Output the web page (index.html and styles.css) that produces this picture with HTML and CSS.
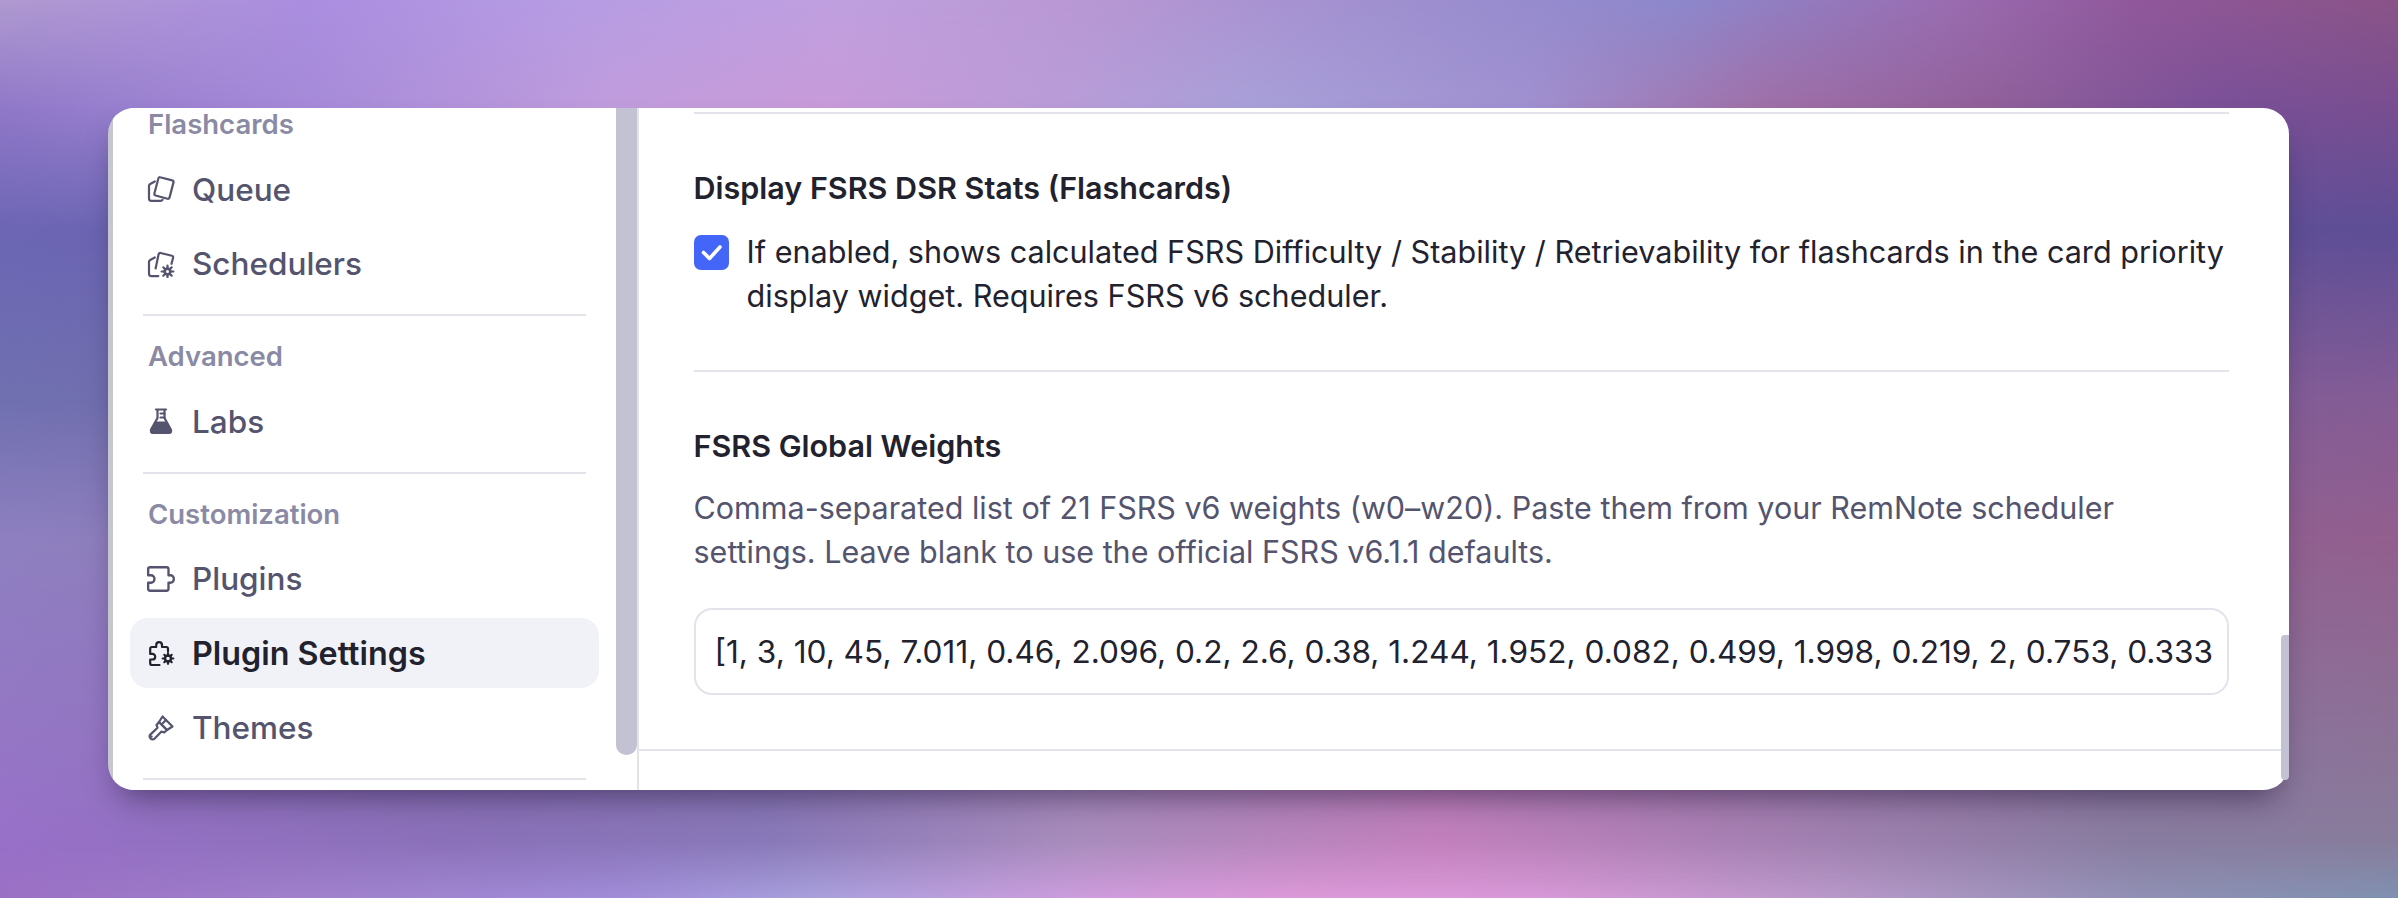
FILE: index.html
```html
<!DOCTYPE html>
<html lang="en">
<head>
    <meta charset="UTF-8">
    <title>Plugin Settings</title>
    <link rel="stylesheet" href="styles.css">
</head>
<body>
    <!-- wallpaper: horizontal colour rows faded into each other from top to bottom -->
    <div class="backdrop">
        <div class="band band-1"></div>
        <div class="band band-2"></div>
        <div class="band band-3"></div>
        <div class="band band-4"></div>
        <div class="band band-5"></div>
        <div class="band band-6"></div>
    </div>

    <div class="card">
        <nav class="sidebar">
            <div class="nav-label">Flashcards</div>
            <div class="nav-item">
                <svg class="nav-icon" viewBox="0 0 28 28"><path d="M13 2.2l12.3 3.2c.9.2 1.4 1.1 1.2 2l-4 15.2c-.2.9-1.1 1.4-2 1.2L8.6 20.5c-.9-.2-1.4-1.1-1.2-2l4-15.2c.2-.9 1.1-1.3 1.6-1.1z"/><path d="M7.8 6.5L3.2 9c-.7.4-1.2 1-1.2 1.8v12.7c0 1.3 1 2.3 2.3 2.3h9.3c.8 0 1.6-.3 2-1"/></svg>
                <span>Queue</span>
            </div>
            <div class="nav-item">
                <svg class="nav-icon" viewBox="0 0 28 28"><path d="M8.6 18.5l3-14.2c.2-.9 1.1-1.5 2-1.3l11.3 2.8c.9.2 1.4 1.1 1.2 2l-1.6 6"/><path d="M7.8 7.5L3.2 10c-.7.4-1.2 1-1.2 1.8v12c0 1.3 1 2.3 2.3 2.3h7"/><path class="gear-teeth" d="M20.5 15.6v11.8M14.6 21.5h11.8M16.3 17.3l8.4 8.4M16.3 25.7l8.4-8.4"/><circle class="gear-solid" cx="20.5" cy="21.5" r="4.2"/><circle class="gear-hole" cx="20.5" cy="21.5" r="1.5"/></svg>
                <span>Schedulers</span>
            </div>
            <div class="nav-sep"></div>

            <div class="nav-label">Advanced</div>
            <div class="nav-item">
                <svg class="nav-icon" viewBox="0 0 28 28"><path d="M9 2.5h10M10.5 2.5v8.5L4.2 22.4c-.9 1.7.2 3.6 2.1 3.6h15.4c1.9 0 3-1.9 2.1-3.6L17.5 11V2.5"/><path class="flask-fill" d="M8.8 15.5h10.4l4.6 8.4c.3.6-.1 1.6-1 1.6H5.2c-.9 0-1.3-1-1-1.6z"/><path d="M13.5 6.5h4M13.5 10.5h4"/></svg>
                <span>Labs</span>
            </div>
            <div class="nav-sep"></div>

            <div class="nav-label">Customization</div>
            <div class="nav-item">
                <svg class="nav-icon plugin" viewBox="0 0 28 28"><path d="M3.8 3h15.4c1 0 1.8.8 1.8 1.8v5.7h1.7c1.9 0 3.3 1.5 3.3 3.5s-1.4 3.5-3.3 3.5H21v5.7c0 1-.8 1.8-1.8 1.8H3.8c-1 0-1.8-.8-1.8-1.8v-5.7h2.6c1.9 0 3.3-1.5 3.3-3.5s-1.4-3.5-3.3-3.5H2V4.8C2 3.8 2.8 3 3.8 3z"/></svg>
                <span>Plugins</span>
            </div>
            <div class="nav-item active">
                <svg class="nav-icon" viewBox="0 0 28 28"><path d="M12.5 26H5c-1 0-1.8-.8-1.8-1.8v-3.7h2.2c1.6 0 2.8-1.2 2.8-2.8s-1.2-2.8-2.8-2.8H3.2V9.8C3.2 8.8 4 8 5 8h4.2V6.2c0-1.7 1.3-3 2.9-3s2.9 1.3 2.9 3V8h4.2c1 0 1.8.8 1.8 1.8v2.4"/><circle class="gear" cx="21" cy="19.5" r="3"/><path class="gear-teeth" d="M21 14.2v2.2M21 22.6v2.2M15.7 19.5h2.2M24.1 19.5h2.2M17.3 15.8l1.5 1.5M23.2 21.7l1.5 1.5M17.3 23.2l1.5-1.5M23.2 17.3l1.5-1.5"/></svg>
                <span>Plugin Settings</span>
            </div>
            <div class="nav-item">
                <svg class="nav-icon" viewBox="0 0 28 28"><path d="M15.5 2.5l10 10-5.5 3.5-8-8z"/><path d="M12 8l8 8-2.8 2.5-2.7-1-6.8 7c-1.2 1.2-3 1.2-4.1 0s-1.2-2.9 0-4.1l6.9-6.7-1-2.7z"/><path d="M19 6l-3 3M4.6 22.6h.1"/></svg>
                <span>Themes</span>
            </div>
            <div class="nav-sep"></div>
        </nav>

        <div class="sidebar-scroll">
            <div class="sidebar-thumb"></div>
        </div>

        <main class="main">
            <div class="main-scroll">
                <div class="settings">
                    <div class="rule"></div>

                    <h3 class="setting-title">Display FSRS DSR Stats (Flashcards)</h3>
                    <div class="check-row">
                        <span class="checkbox">
                            <svg viewBox="0 0 35 35"><path d="M9.5 17.5l6 6L26 12"/></svg>
                        </span>
                        <div class="check-text">If enabled, shows calculated FSRS Difficulty / Stability / Retrievability for flashcards in the card priority display widget. Requires FSRS v6 scheduler.</div>
                    </div>
                    <div class="rule rule-gap"></div>

                    <h3 class="setting-title">FSRS Global Weights</h3>
                    <p class="setting-desc">Comma-separated list of 21 FSRS v6 weights (w0–w20). Paste them from your RemNote scheduler settings. Leave blank to use the official FSRS v6.1.1 defaults.</p>
                    <input class="weights-input" type="text" value="[1, 3, 10, 45, 7.011, 0.46, 2.096, 0.2, 2.6, 0.38, 1.244, 1.952, 0.082, 0.499, 1.998, 0.219, 2, 0.753, 0.333">
                </div>
                <div class="footer-rule"></div>
            </div>
            <div class="main-track">
                <div class="main-thumb"></div>
            </div>
        </main>
    </div>
</body>
</html>
```

FILE: styles.css
```css
* {
    box-sizing: border-box;
}

html, body {
    height: 100%;
}

body {
    position: relative;
    margin: 0;
    padding: 108px 109px 108px 108px;
    overflow: hidden;
    font-family: Inter, "Noto Sans", sans-serif;
}

.backdrop,
.band {
    position: absolute;
    top: 0;
    right: 0;
    bottom: 0;
    left: 0;
}

.backdrop {
    background: linear-gradient(to right, #b09ad0 0%, #ab8ee0 12.8%, #b69ce4 23.6%, #c0a0e0 35%, #b998d4 44.6%, #a090d0 57.4%, #8d88cc 70%, #9a6cb0 81.6%, #90589a 89.3%, #8a5488 100%);
}

.band-1 {
    background: linear-gradient(to right, #9078c8 0%, #a58ad8 12.8%, #c09cdc 25.5%, #c89ad8 34.4%, #b89cd8 44.6%, #a8a0d8 52.3%, #a090d0 63.8%, #a070a8 73.3%, #90609a 83%, #7a5098 92.5%, #784e90 100%);
    -webkit-mask-image: linear-gradient(to bottom, transparent 0, #000 108px);
    mask-image: linear-gradient(to bottom, transparent 0, #000 108px);
}

.band-2 {
    background: linear-gradient(to right, #6c66b4 0%, #5e4e96 100%);
    -webkit-mask-image: linear-gradient(to bottom, transparent 108px, #000 230px);
    mask-image: linear-gradient(to bottom, transparent 108px, #000 230px);
}

.band-3 {
    background: linear-gradient(to right, #7070b0 0%, #845c95 100%);
    -webkit-mask-image: linear-gradient(to bottom, transparent 230px, #000 400px);
    mask-image: linear-gradient(to bottom, transparent 230px, #000 400px);
}

.band-4 {
    background: linear-gradient(to right, #8e80c0 0%, #925f8e 100%);
    -webkit-mask-image: linear-gradient(to bottom, transparent 400px, #000 540px);
    mask-image: linear-gradient(to bottom, transparent 400px, #000 540px);
}

.band-5 {
    background: linear-gradient(to right, #9870c8 0%, #8a70b8 19%, #8878b8 32%, #a88cbc 45%, #c280bc 60%, #a080b0 76%, #887ca0 89%, #887c9c 100%);
    -webkit-mask-image: linear-gradient(to bottom, transparent 540px, #000 840px);
    mask-image: linear-gradient(to bottom, transparent 540px, #000 840px);
}

.band-6 {
    background: linear-gradient(to right, #9a70c4 0%, #a080cc 12.8%, #a08cd8 25.5%, #a8a0dc 33.8%, #cc9cdc 44.6%, #dc98d8 54.2%, #d898d8 63.8%, #b898c8 76.5%, #9090b4 89.3%, #8090b0 100%);
    -webkit-mask-image: linear-gradient(to bottom, transparent 840px, #000 898px);
    mask-image: linear-gradient(to bottom, transparent 840px, #000 898px);
}

/* the grey strip on the left edge is part of the card background so the corners round it */
.card {
    position: relative;
    display: flex;
    height: 682px;
    padding-left: 5px;
    background: linear-gradient(to right, #c6c6ce 5px, #fff 5px);
    border-radius: 26px;
    box-shadow: 0 18px 32px -12px rgba(25, 15, 45, 0.55);
}

.sidebar {
    width: 502.5px;
    flex-shrink: 0;
    padding: 1px 16.5px 0 17px;
    background-color: #fff;
    border-radius: 22px 0 0 22px;
}

.nav-label {
    padding-left: 18px;
    margin-bottom: 15px;
    font-size: 27.5px;
    line-height: 30px;
    font-weight: 600;
    color: #8a8aa4;
}

.nav-item {
    display: flex;
    align-items: center;
    gap: 17px;
    height: 70px;
    margin-bottom: 4.5px;
    padding-left: 17px;
    border-radius: 18px;
    font-size: 31.5px;
    font-weight: 500;
    color: #54546e;
}

.nav-item.active {
    background-color: #f1f2f8;
    font-size: 32.3px;
    font-weight: 600;
    color: #22222e;
}

.nav-icon {
    width: 28px;
    height: 28px;
    flex-shrink: 0;
    fill: none;
    stroke: currentColor;
    stroke-width: 2.2;
    stroke-linecap: round;
    stroke-linejoin: round;
}

.nav-icon.plugin {
    width: 30px;
    height: 30px;
    margin: 0 -1px;
}

.nav-icon .gear {
    stroke-width: 2.4;
}

.nav-icon .gear-teeth {
    stroke-width: 2.2;
}

.nav-icon .gear-solid {
    fill: currentColor;
    stroke: none;
}

.nav-icon .gear-hole {
    fill: #fff;
    stroke: none;
}

.nav-icon .flask-fill {
    fill: currentColor;
}

.nav-sep {
    height: 2px;
    margin: 15.5px 13px 25px;
    background-color: #e3e3ec;
}

.sidebar-scroll {
    width: 23px;
    flex-shrink: 0;
    border-right: 2px solid #e3e3ec;
}

.sidebar-thumb {
    width: 21px;
    height: 647px;
    background-color: #c2c2d2;
    border-radius: 0 0 10px 10px;
}

.main {
    flex: 1;
    display: flex;
    min-width: 0;
}

.main-scroll {
    flex: 1;
    min-width: 0;
}

.settings {
    padding: 4px 52px 54px 55px;
}

.rule {
    height: 2px;
    background-color: #e3e3ec;
}

.rule-gap {
    margin-top: 52px;
}

.setting-title {
    margin: 56px 0 22px;
    font-size: 30.5px;
    line-height: 36px;
    font-weight: 600;
    color: #22222e;
}

.check-row {
    display: flex;
    gap: 18px;
    margin-top: 24px;
}

.checkbox {
    width: 35px;
    height: 35px;
    margin-top: 5px;
    flex-shrink: 0;
    background-color: #4466f8;
    border-radius: 7px;
}

.checkbox svg {
    display: block;
    fill: none;
    stroke: #fff;
    stroke-width: 3.6;
    stroke-linecap: round;
    stroke-linejoin: round;
}

.check-text {
    font-size: 30.6px;
    line-height: 44px;
    color: #22222e;
}

.setting-desc {
    margin: 0 0 34px;
    font-size: 30.5px;
    line-height: 44px;
    color: #54546e;
}

.weights-input {
    display: block;
    width: 100%;
    height: 87px;
    padding: 0 8px 0 19px;
    border: 2px solid #e3e3ec;
    border-radius: 18px;
    font-family: inherit;
    font-size: 31.6px;
    color: #22222e;
    background-color: #fff;
    outline: none;
}

.footer-rule {
    height: 2px;
    background-color: #e3e3ec;
}

.main-track {
    width: 8px;
    flex-shrink: 0;
    padding-top: 527px;
}

.main-thumb {
    height: 145px;
    background-color: #c2c2d2;
    border-radius: 6px 0 6px 6px;
}
```
